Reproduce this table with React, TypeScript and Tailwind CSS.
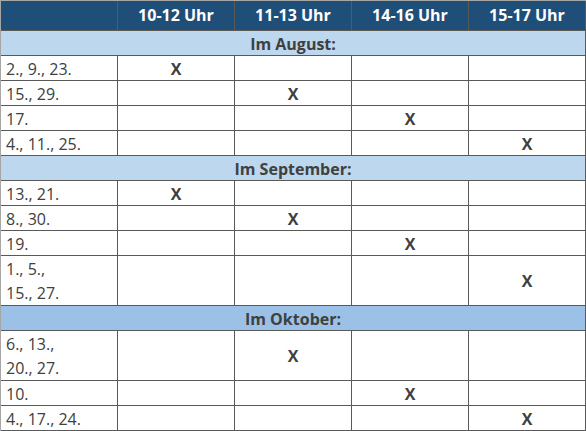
import React from 'react'

type Row = { dates: string[]; slot: number }
type Month = { label: string; bg: string; rows: Row[] }

const slots = ['10-12 Uhr', '11-13 Uhr', '14-16 Uhr', '15-17 Uhr']

const months: Month[] = [
  {
    label: 'Im August:',
    bg: 'bg-[#bdd7ee]',
    rows: [
      { dates: ['2., 9., 23.'], slot: 0 },
      { dates: ['15., 29.'], slot: 1 },
      { dates: ['17.'], slot: 2 },
      { dates: ['4., 11., 25.'], slot: 3 },
    ],
  },
  {
    label: 'Im September:',
    bg: 'bg-[#bdd7ee]',
    rows: [
      { dates: ['13., 21.'], slot: 0 },
      { dates: ['8., 30.'], slot: 1 },
      { dates: ['19.'], slot: 2 },
      { dates: ['1., 5.,', '15., 27.'], slot: 3 },
    ],
  },
  {
    label: 'Im Oktober:',
    bg: 'bg-[#9bc2e6]',
    rows: [
      { dates: ['6., 13.,', '20., 27.'], slot: 1 },
      { dates: ['10.'], slot: 2 },
      { dates: ['4., 17., 24.'], slot: 3 },
    ],
  },
]

export default function App() {
  return (
    <div className="w-[586px] h-[431px] bg-white text-[16px] text-[#404040] font-['Open_Sans',sans-serif]">
      <div className="grid grid-cols-[repeat(5,116px)] gap-px bg-[#595959] border-t border-l border-[#a6a6a6] pr-px pb-px">
        {/* Header */}
        <div className="h-[29px] bg-[#1f4e79]" />
        {slots.map((s) => (
          <div
            key={s}
            className="h-[29px] bg-[#1f4e79] text-white font-bold flex items-center justify-center pb-px"
          >
            {s}
          </div>
        ))}

        {months.map((m) => (
          <React.Fragment key={m.label}>
            <div className={`col-span-5 h-[24px] ${m.bg} font-bold text-center leading-[24px] pt-px`}>
              {m.label}
            </div>
            {m.rows.map((r) => {
              const tall = r.dates.length > 1
              return (
                <React.Fragment key={r.dates.join()}>
                  <div className={`${tall ? 'h-[49px]' : 'h-[24px]'} bg-white leading-[24px] pt-px pl-[5px]`}>
                    {r.dates.map((d) => (
                      <div key={d}>{d}</div>
                    ))}
                  </div>
                  {slots.map((s, i) => (
                    <div
                      key={s}
                      className={`${tall ? 'h-[49px] flex items-center justify-center' : 'h-[24px] text-center leading-[24px] pt-px'} bg-white font-bold`}
                    >
                      {i === r.slot ? 'X' : ''}
                    </div>
                  ))}
                </React.Fragment>
              )
            })}
          </React.Fragment>
        ))}
      </div>
    </div>
  )
}
